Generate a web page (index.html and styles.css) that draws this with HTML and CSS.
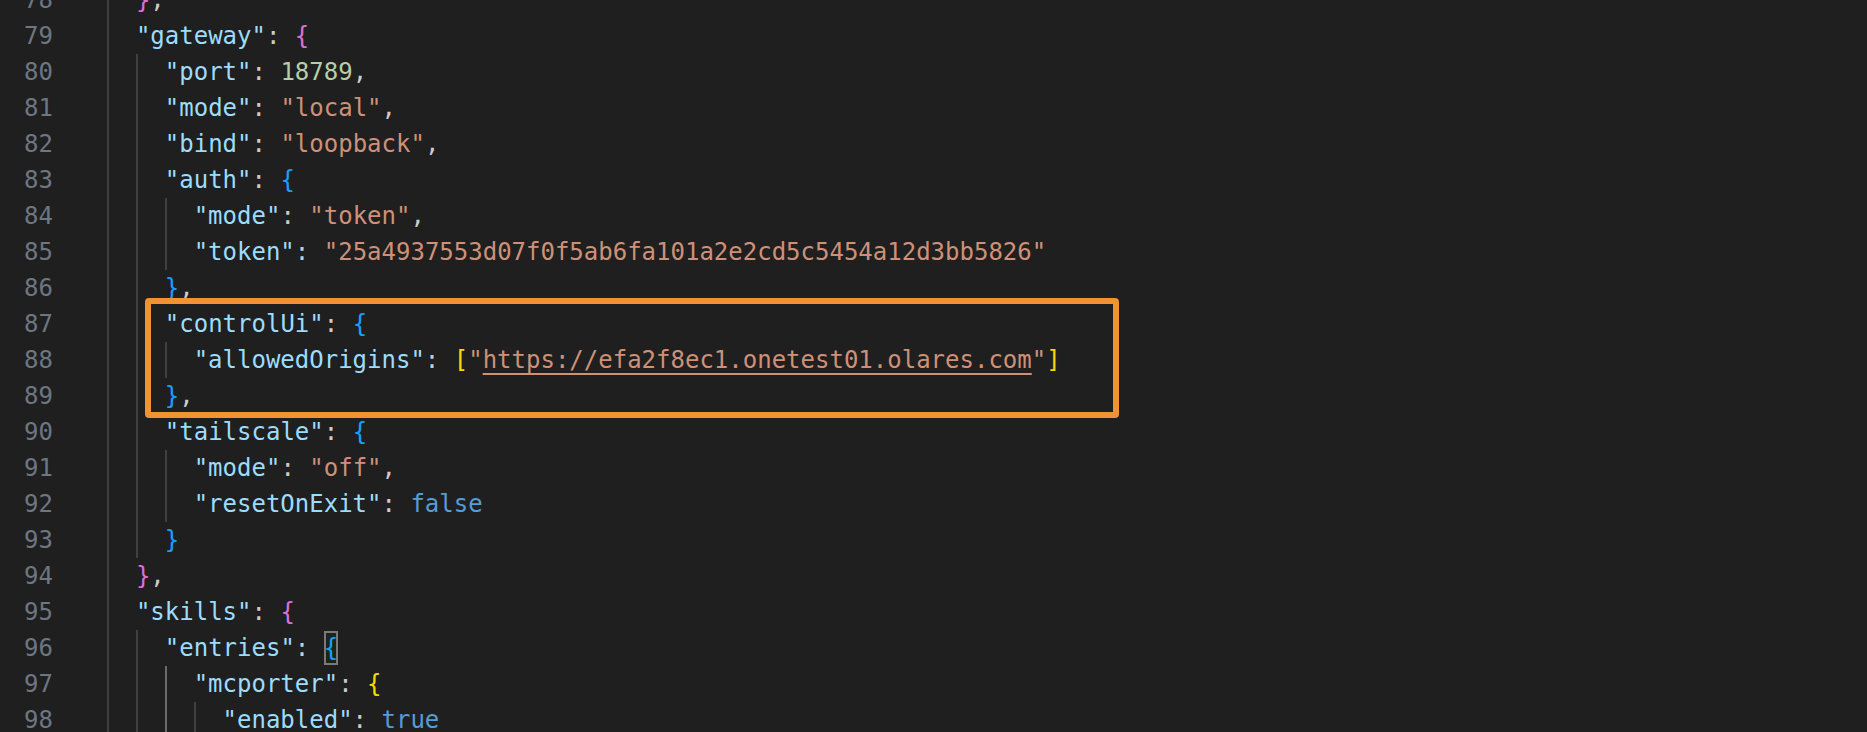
FILE: index.html
```html
<!DOCTYPE html>
<html>
<head>
<meta charset="utf-8">
<link rel="stylesheet" href="styles.css">
</head>
<body>
<div class="editor">
  <div class="row"><span class="ln">78</span><span class="code"><span class="ind"></span><span class="b2">}</span><span class="p">,</span></span></div>
  <div class="row"><span class="ln">79</span><span class="code"><span class="ind"></span><span class="k">"gateway"</span><span class="p">: </span><span class="b2">{</span></span></div>
  <div class="row"><span class="ln">80</span><span class="code"><span class="ind"></span><span class="ind"></span><span class="k">"port"</span><span class="p">: </span><span class="n">18789</span><span class="p">,</span></span></div>
  <div class="row"><span class="ln">81</span><span class="code"><span class="ind"></span><span class="ind"></span><span class="k">"mode"</span><span class="p">: </span><span class="s">"local"</span><span class="p">,</span></span></div>
  <div class="row"><span class="ln">82</span><span class="code"><span class="ind"></span><span class="ind"></span><span class="k">"bind"</span><span class="p">: </span><span class="s">"loopback"</span><span class="p">,</span></span></div>
  <div class="row"><span class="ln">83</span><span class="code"><span class="ind"></span><span class="ind"></span><span class="k">"auth"</span><span class="p">: </span><span class="b3">{</span></span></div>
  <div class="row"><span class="ln">84</span><span class="code"><span class="ind"></span><span class="ind"></span><span class="ind"></span><span class="k">"mode"</span><span class="p">: </span><span class="s">"token"</span><span class="p">,</span></span></div>
  <div class="row"><span class="ln">85</span><span class="code"><span class="ind"></span><span class="ind"></span><span class="ind"></span><span class="k">"token"</span><span class="p">: </span><span class="s">"25a4937553d07f0f5ab6fa101a2e2cd5c5454a12d3bb5826"</span></span></div>
  <div class="row"><span class="ln">86</span><span class="code"><span class="ind"></span><span class="ind"></span><span class="b3">}</span><span class="p">,</span></span></div>
  <div class="row"><span class="ln">87</span><span class="code"><span class="ind"></span><span class="ind"></span><span class="k">"controlUi"</span><span class="p">: </span><span class="b3">{</span></span></div>
  <div class="row"><span class="ln">88</span><span class="code"><span class="ind"></span><span class="ind"></span><span class="ind"></span><span class="k">"allowedOrigins"</span><span class="p">: </span><span class="b1">[</span><span class="s">"<span class="link">https://efa2f8ec1.onetest01.olares.com</span>"</span><span class="b1">]</span></span></div>
  <div class="row"><span class="ln">89</span><span class="code"><span class="ind"></span><span class="ind"></span><span class="b3">}</span><span class="p">,</span></span></div>
  <div class="row"><span class="ln">90</span><span class="code"><span class="ind"></span><span class="ind"></span><span class="k">"tailscale"</span><span class="p">: </span><span class="b3">{</span></span></div>
  <div class="row"><span class="ln">91</span><span class="code"><span class="ind"></span><span class="ind"></span><span class="ind"></span><span class="k">"mode"</span><span class="p">: </span><span class="s">"off"</span><span class="p">,</span></span></div>
  <div class="row"><span class="ln">92</span><span class="code"><span class="ind"></span><span class="ind"></span><span class="ind"></span><span class="k">"resetOnExit"</span><span class="p">: </span><span class="c">false</span></span></div>
  <div class="row"><span class="ln">93</span><span class="code"><span class="ind"></span><span class="ind"></span><span class="b3">}</span></span></div>
  <div class="row"><span class="ln">94</span><span class="code"><span class="ind"></span><span class="b2">}</span><span class="p">,</span></span></div>
  <div class="row"><span class="ln">95</span><span class="code"><span class="ind"></span><span class="k">"skills"</span><span class="p">: </span><span class="b2">{</span></span></div>
  <div class="row"><span class="ln">96</span><span class="code"><span class="ind"></span><span class="ind"></span><span class="k">"entries"</span><span class="p">: </span><span class="b3 match">{</span></span></div>
  <div class="row"><span class="ln">97</span><span class="code"><span class="ind"></span><span class="ind"></span><span class="ind active"></span><span class="k">"mcporter"</span><span class="p">: </span><span class="b1">{</span></span></div>
  <div class="row"><span class="ln">98</span><span class="code"><span class="ind"></span><span class="ind"></span><span class="ind active"></span><span class="ind"></span><span class="k">"enabled"</span><span class="p">: </span><span class="c">true</span></span></div>
</div>
<div class="highlight"></div>
</body>
</html>
```

FILE: styles.css
```css
html, body {
  margin: 0;
  padding: 0;
  background: #1f1f1f;
  overflow: hidden;
  height: 100%;
}

.editor {
  margin-top: -18px;
  font-family: "DejaVu Sans Mono", "Liberation Mono", monospace;
  font-size: 24px;
  line-height: 36px;
  color: #cccccc;
}

.row {
  display: flex;
  height: 36px;
  white-space: pre;
}

.ln {
  width: 53px;
  flex: none;
  text-align: right;
  color: #6e7681;
}

.code {
  margin-left: 54px;
  display: flex;
  align-items: flex-start;
}

.ind {
  display: inline-block;
  width: 2ch;
  height: 36px;
  background: linear-gradient(#404040, #404040) no-repeat left top / 2px 100%;
}

.ind.active {
  background-image: linear-gradient(#6a6a6a, #6a6a6a);
}

.k { color: #9cdcfe; }
.s { color: #ce9178; }
.n { color: #b5cea8; }
.c { color: #569cd6; }
.p { color: #cccccc; }
.b1 { color: #ffd700; }
.b2 { color: #da70d6; }
.b3 { color: #179fff; }

.link {
  text-decoration: underline;
  text-decoration-color: #ce9178;
  text-decoration-thickness: 2px;
  text-underline-offset: 5px;
}

.match {
  display: inline-block;
  height: 34px;
  line-height: 34px;
  margin-top: 1px;
  background: rgba(0, 100, 0, 0.1);
  box-shadow: inset 0 0 0 2px #7a7a7a;
}

.highlight {
  position: absolute;
  left: 145px;
  top: 298px;
  width: 974px;
  height: 120px;
  box-sizing: border-box;
  border: 6px solid #f19233;
  border-radius: 4px;
}
```
